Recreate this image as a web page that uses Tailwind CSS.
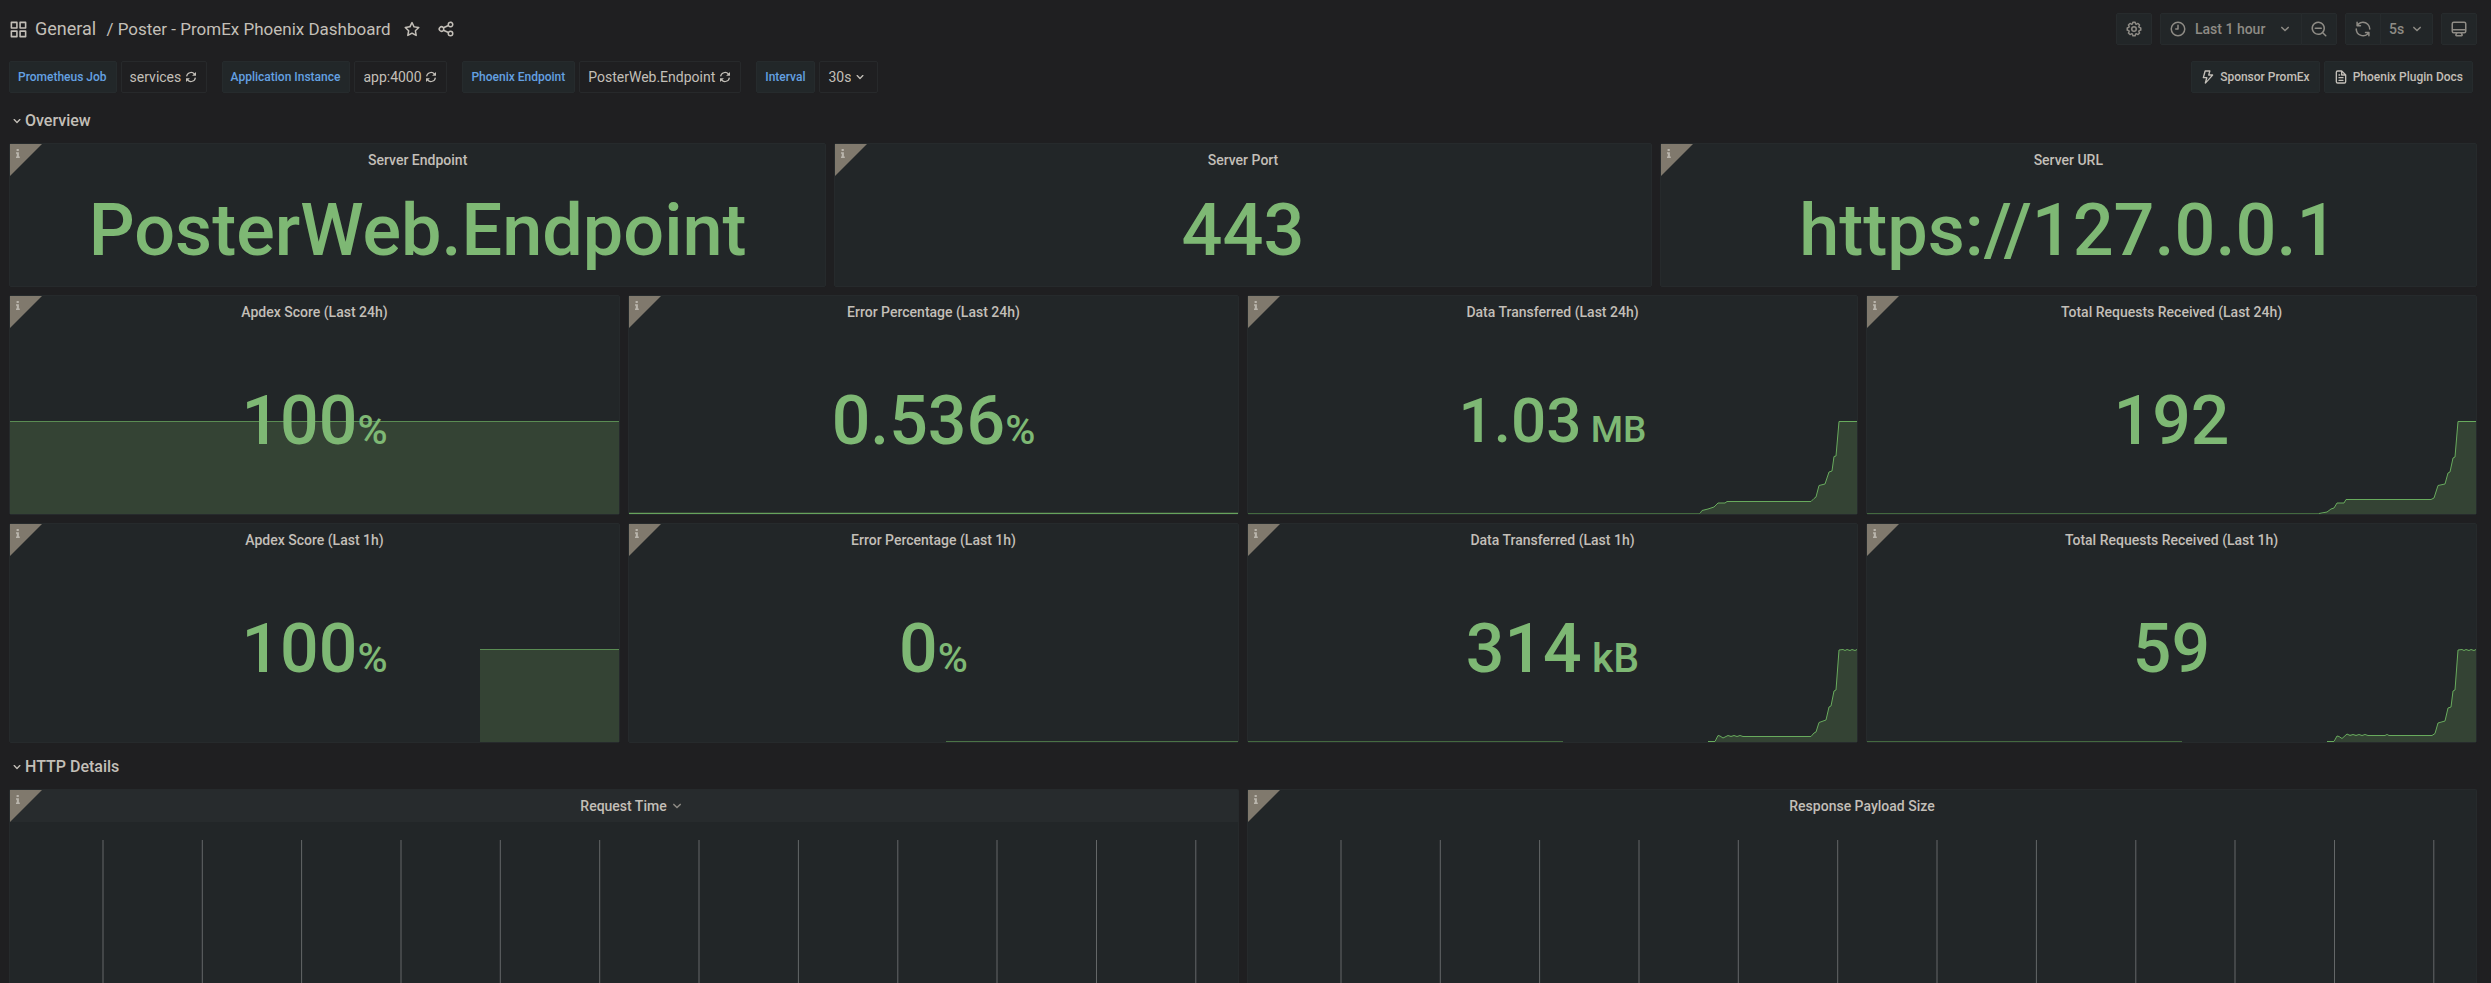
<!DOCTYPE html>
<html lang="en">
<head>
<meta charset="utf-8">
<meta name="viewport" content="width=device-width, initial-scale=1">
<title>Poster - PromEx Phoenix Dashboard</title>
<script src="https://cdn.jsdelivr.net/npm/@tailwindcss/browser@4"></script>
</head>
<body class="flex h-screen flex-col overflow-hidden bg-[#1f1f21] pt-[13px] pr-[14px] pl-[9px] font-['Roboto',sans-serif] text-sm text-[#c3bfb8]">

<!-- Icon sprite -->
<svg class="hidden" aria-hidden="true">
  <symbol id="apps" viewBox="0 0 24 24"><path d="M10,13H3a1,1,0,0,0-1,1v7a1,1,0,0,0,1,1h7a1,1,0,0,0,1-1V14A1,1,0,0,0,10,13ZM9,20H4V15H9ZM21,2H14a1,1,0,0,0-1,1v7a1,1,0,0,0,1,1h7a1,1,0,0,0,1-1V3A1,1,0,0,0,21,2ZM20,9H15V4h5Zm1,4H14a1,1,0,0,0-1,1v7a1,1,0,0,0,1,1h7a1,1,0,0,0,1-1V14A1,1,0,0,0,21,13Zm-1,7H15V15h5ZM10,2H3A1,1,0,0,0,2,3v7a1,1,0,0,0,1,1h7a1,1,0,0,0,1-1V3A1,1,0,0,0,10,2ZM9,9H4V4H9Z"/></symbol>
  <symbol id="star" viewBox="0 0 24 24"><path d="M22,9.67A1,1,0,0,0,21.14,9l-5.69-.83L12.9,3a1,1,0,0,0-1.8,0L8.55,8.16,2.86,9a1,1,0,0,0-.81.68,1,1,0,0,0,.25,1l4.13,4-1,5.68A1,1,0,0,0,6.9,21.44L12,18.77l5.1,2.67a.93.93,0,0,0,.46.12,1,1,0,0,0,.59-.19,1,1,0,0,0,.4-1l-1-5.68,4.13-4A1,1,0,0,0,22,9.67Zm-6.15,4a1,1,0,0,0-.29.88l.72,4.2-3.76-2a1.06,1.06,0,0,0-.94,0l-3.76,2,.72-4.2a1,1,0,0,0-.29-.88l-3-3,4.21-.61a1,1,0,0,0,.76-.55L12,5.7l1.88,3.82a1,1,0,0,0,.76.55l4.21.61Z"/></symbol>
  <symbol id="share" viewBox="0 0 24 24"><path d="M18,14a4,4,0,0,0-3.08,1.48l-5.1-2.35a3.64,3.64,0,0,0,0-2.26l5.1-2.35A4,4,0,1,0,14,6a4.17,4.17,0,0,0,.07.71L8.79,9.14a4,4,0,1,0,0,5.72l5.28,2.43A4.17,4.17,0,0,0,14,18a4,4,0,1,0,4-4ZM18,4a2,2,0,1,1-2,2A2,2,0,0,1,18,4ZM6,14a2,2,0,1,1,2-2A2,2,0,0,1,6,14Zm12,6a2,2,0,1,1,2-2A2,2,0,0,1,18,20Z"/></symbol>
  <symbol id="sync" viewBox="0 0 24 24"><path d="M19.91,15.51H15.38a1,1,0,0,0,0,2h2.4A8,8,0,0,1,4,12a1,1,0,0,0-2,0,10,10,0,0,0,16.88,7.23V21a1,1,0,0,0,2,0V16.5A1,1,0,0,0,19.91,15.51ZM12,2A10,10,0,0,0,5.12,4.77V3a1,1,0,0,0-2,0V7.5a1,1,0,0,0,1,1h4.5a1,1,0,0,0,0-2H6.22A8,8,0,0,1,20,12a1,1,0,0,0,2,0A10,10,0,0,0,12,2Z"/></symbol>
  <symbol id="reload" viewBox="0 0 12 12"><path d="M1.6 5.4A4.5 4.5 0 0 1 9.4 3M10.4 6.6A4.5 4.5 0 0 1 2.6 9" fill="none" stroke="currentColor" stroke-width="1.2"/><path d="M11 .9v3.9H7.1zM1 11.1V7.2h3.9z"/></symbol>
  <symbol id="angle" viewBox="0 0 24 24"><path d="M17,9.17a1,1,0,0,0-1.41,0L12,12.71,8.46,9.17a1,1,0,0,0-1.41,0,1,1,0,0,0,0,1.42l4.24,4.24a1,1,0,0,0,1.42,0L17,10.59A1,1,0,0,0,17,9.17Z"/></symbol>
  <symbol id="clock" viewBox="0 0 24 24"><g fill="none" stroke="currentColor" stroke-width="2" stroke-linecap="round" stroke-linejoin="round"><circle cx="12" cy="12" r="9"/><path d="M12 7v5H9"/></g></symbol>
  <symbol id="zoomout" viewBox="0 0 24 24"><path d="M21.71,20.29,18,16.61A9,9,0,1,0,16.61,18l3.68,3.68a1,1,0,0,0,1.42,0A1,1,0,0,0,21.71,20.29ZM11,18a7,7,0,1,1,7-7A7,7,0,0,1,11,18Zm4-8H7a1,1,0,0,0,0,2h8a1,1,0,0,0,0-2Z"/></symbol>
  <symbol id="cog" viewBox="0 0 24 24"><path d="M21.32,9.55l-1.89-.63.89-1.78A1,1,0,0,0,20.13,6L18,3.87a1,1,0,0,0-1.15-.19l-1.78.89-.63-1.89A1,1,0,0,0,13.5,2h-3a1,1,0,0,0-.95.68L8.92,4.57,7.14,3.68A1,1,0,0,0,6,3.87L3.87,6a1,1,0,0,0-.19,1.15l.89,1.78-1.89.63A1,1,0,0,0,2,10.5v3a1,1,0,0,0,.68.95l1.89.63-.89,1.78A1,1,0,0,0,3.87,18L6,20.13a1,1,0,0,0,1.15.19l1.78-.89.63,1.89a1,1,0,0,0,.95.68h3a1,1,0,0,0,.95-.68l.63-1.89,1.78.89A1,1,0,0,0,18,20.13L20.13,18a1,1,0,0,0,.19-1.15l-.89-1.78,1.89-.63A1,1,0,0,0,22,13.5v-3A1,1,0,0,0,21.32,9.55ZM20,12.78l-1.2.4A2,2,0,0,0,17.64,16l.57,1.14-1.1,1.1L16,17.64a2,2,0,0,0-2.79,1.16l-.4,1.2H11.22l-.4-1.2A2,2,0,0,0,8,17.64l-1.14.57-1.1-1.1L6.36,16A2,2,0,0,0,5.2,13.18L4,12.78V11.22l1.2-.4A2,2,0,0,0,6.36,8L5.79,6.89l1.1-1.1L8,6.36A2,2,0,0,0,10.82,5.2l.4-1.2h1.56l.4,1.2A2,2,0,0,0,16,6.36l1.14-.57,1.1,1.1L17.64,8a2,2,0,0,0,1.16,2.79l1.2.4ZM12,8a4,4,0,1,0,4,4A4,4,0,0,0,12,8Zm0,6a2,2,0,1,1,2-2A2,2,0,0,1,12,14Z"/></symbol>
  <symbol id="monitor" viewBox="0 0 24 24"><path d="M19,2H5A3,3,0,0,0,2,5V15a3,3,0,0,0,3,3H7.64l-.58,1a2,2,0,0,0,0,2,2,2,0,0,0,1.75,1h6.46A2,2,0,0,0,17,21a2,2,0,0,0,0-2l-.59-1H19a3,3,0,0,0,3-3V5A3,3,0,0,0,19,2ZM8.77,20,10,18H14l1.2,2ZM20,15a1,1,0,0,1-1,1H5a1,1,0,0,1-1-1V14H20Zm0-3H4V5A1,1,0,0,1,5,4H19a1,1,0,0,1,1,1Z"/></symbol>
  <symbol id="bolt" viewBox="0 0 24 24"><path d="M19.87,8.6A1,1,0,0,0,19,8H14.42l1.27-4.74a1,1,0,0,0-.17-.87A1,1,0,0,0,14.72,2h-7a1,1,0,0,0-1,.74l-2.68,10a1,1,0,0,0,.17.87,1,1,0,0,0,.8.39H8.89L7.08,20.74a1,1,0,0,0,1.71.93L19.7,9.57A1,1,0,0,0,19.87,8.6ZM10,17.83l1.18-4.4a1,1,0,0,0-.17-.87,1,1,0,0,0-.8-.39H6.35L8.49,4h4.93L12.15,8.74a1,1,0,0,0,1,1.26h3.57Z"/></symbol>
  <symbol id="file" viewBox="0 0 24 24"><path d="M9,10h1a1,1,0,0,0,0-2H9a1,1,0,0,0,0,2Zm0,2a1,1,0,0,0,0,2h6a1,1,0,0,0,0-2ZM20,8.94a1.31,1.31,0,0,0-.06-.27l0-.09a1.07,1.07,0,0,0-.19-.28h0l-6-6h0a1.07,1.07,0,0,0-.28-.19.32.32,0,0,0-.09,0A.88.88,0,0,0,13.05,2H7A3,3,0,0,0,4,5V19a3,3,0,0,0,3,3H17a3,3,0,0,0,3-3V9S20,9,20,8.94ZM14,5.41,16.59,8H14ZM18,19a1,1,0,0,1-1,1H7a1,1,0,0,1-1-1V5A1,1,0,0,1,7,4h5V9a1,1,0,0,0,1,1h5Zm-3-3H9a1,1,0,0,0,0,2h6a1,1,0,0,0,0-2Z"/></symbol>
  <symbol id="info" viewBox="0 0 32 32"><path d="M0 0H32L0 32Z" fill="#80796d"/><path d="M6.6 5h2.2v2H6.600zM6 8.200h2.900v4.300h.9V14H6v-1.500h.8V9.700H6z" fill="#b9b5ac"/></symbol>
</svg>

<!-- Toolbar -->
<header class="flex h-8 shrink-0 items-center">
  <svg class="size-[19px] fill-current" aria-hidden="true"><use href="#apps"/></svg>
  <nav class="ml-[7px] flex items-baseline gap-[6px] text-lg whitespace-pre" aria-label="Breadcrumb"><a href="#general">General</a><a href="#dashboard" class="text-[17px]"> / Poster - PromEx Phoenix Dashboard</a></nav>
  <button class="ml-3 size-[18px]" aria-label="Mark as favorite"><svg class="size-[18px] fill-current" aria-hidden="true"><use href="#star"/></svg></button>
  <button class="ml-4 size-[18px]" aria-label="Share dashboard"><svg class="size-[18px] fill-current" aria-hidden="true"><use href="#share"/></svg></button>
  <div class="ml-auto flex gap-2 font-medium text-[#8e8b85]">
    <button class="flex h-8 w-9 items-center justify-center rounded-xs border border-[#272b2d] bg-[#222628]" aria-label="Dashboard settings"><svg class="size-[18px] fill-current" aria-hidden="true"><use href="#cog"/></svg></button>
    <div class="flex">
      <button class="flex h-8 w-[142px] items-center rounded-l-xs border border-[#272b2d] bg-[#222628] pl-2"><svg class="size-[18px] fill-current" aria-hidden="true"><use href="#clock"/></svg><span class="ml-2">Last 1 hour</span><svg class="mr-[7px] ml-auto size-[18px] fill-current" aria-hidden="true"><use href="#angle"/></svg></button>
      <button class="-ml-px flex h-8 w-9 items-center justify-center rounded-r-xs border border-[#272b2d] bg-[#222628]" aria-label="Zoom out"><svg class="size-[18px] fill-current" aria-hidden="true"><use href="#zoomout"/></svg></button>
    </div>
    <div class="flex">
      <button class="flex h-8 w-9 items-center justify-center rounded-l-xs border border-[#272b2d] bg-[#222628]" aria-label="Refresh"><svg class="size-[18px] fill-current" aria-hidden="true"><use href="#sync"/></svg></button>
      <label class="-ml-px flex h-8 w-[53px] items-center rounded-r-xs border border-[#272b2d] bg-[#222628] pl-2"><select class="appearance-none outline-none" aria-label="Refresh interval"><option>5s</option></select><svg class="ml-[3px] size-[18px] fill-current" aria-hidden="true"><use href="#angle"/></svg></label>
    </div>
    <button class="flex h-8 w-9 items-center justify-center rounded-xs border border-[#272b2d] bg-[#222628]" aria-label="Cycle view mode"><svg class="size-[18px] fill-current" aria-hidden="true"><use href="#monitor"/></svg></button>
  </div>
</header>

<!-- Variables and links -->
<div class="mt-4 flex h-8 shrink-0 items-stretch gap-[15px] pr-1">
  <div class="flex gap-1">
    <label for="job" class="flex items-center rounded-xs border border-[#262b2d] bg-[#222729] pr-[9px] pl-2 text-xs font-medium text-[#64a1e2]">Prometheus Job</label>
    <div class="flex items-center rounded-xs border border-[#27292b] pr-[9px] pl-2"><select id="job" class="appearance-none outline-none"><option>services</option></select><svg class="ml-[3px] size-3 fill-current" aria-hidden="true"><use href="#reload"/></svg></div>
  </div>
  <div class="flex gap-1">
    <label for="instance" class="flex items-center rounded-xs border border-[#262b2d] bg-[#222729] pr-[9px] pl-2 text-xs font-medium text-[#64a1e2]">Application Instance</label>
    <div class="flex items-center rounded-xs border border-[#27292b] pr-[9px] pl-2"><select id="instance" class="appearance-none outline-none"><option>app:4000</option></select><svg class="ml-[3px] size-3 fill-current" aria-hidden="true"><use href="#reload"/></svg></div>
  </div>
  <div class="flex gap-1">
    <label for="endpoint" class="flex items-center rounded-xs border border-[#262b2d] bg-[#222729] pr-[9px] pl-2 text-xs font-medium text-[#64a1e2]">Phoenix Endpoint</label>
    <div class="flex items-center rounded-xs border border-[#27292b] pr-[9px] pl-2"><select id="endpoint" class="appearance-none outline-none"><option>PosterWeb.Endpoint</option></select><svg class="ml-[3px] size-3 fill-current" aria-hidden="true"><use href="#reload"/></svg></div>
  </div>
  <div class="flex gap-1">
    <label for="interval" class="flex items-center rounded-xs border border-[#262b2d] bg-[#222729] pr-[9px] pl-2 text-xs font-medium text-[#64a1e2]">Interval</label>
    <div class="flex items-center rounded-xs border border-[#27292b] pr-[9px] pl-2"><select id="interval" class="appearance-none outline-none"><option>30s</option></select><svg class="ml-px size-4 fill-current" aria-hidden="true"><use href="#angle"/></svg></div>
  </div>
  <div class="ml-auto flex gap-1 text-xs font-medium">
    <a href="#sponsor" class="flex items-center gap-1 rounded-xs border border-[#262b2d] bg-[#222729] pr-[9px] pl-2"><svg class="size-4 fill-current" aria-hidden="true"><use href="#bolt"/></svg>Sponsor PromEx</a>
    <a href="#docs" class="flex items-center gap-1 rounded-xs border border-[#262b2d] bg-[#222729] pr-[9px] pl-2"><svg class="size-4 fill-current" aria-hidden="true"><use href="#file"/></svg>Phoenix Plugin Docs</a>
  </div>
</div>

<main class="mt-3 flex min-h-0 flex-1 flex-col gap-2">
  <button class="flex h-[30px] shrink-0 items-center pt-0.5 text-base font-medium" aria-expanded="true"><svg class="size-4 fill-current" aria-hidden="true"><use href="#angle"/></svg>Overview</button>

  <div class="grid shrink-0 grid-cols-3 gap-2">
    <section class="relative flex h-36 flex-col rounded-xs border border-[#262a2c] bg-[#222628]">
      <svg class="absolute top-0 left-0 size-8" aria-hidden="true"><use href="#info"/></svg>
      <h2 class="h-8 text-center leading-8 font-medium">Server Endpoint</h2>
      <p class="flex flex-1 items-center justify-center text-7xl leading-none font-medium text-[#7eb874]">PosterWeb.Endpoint</p>
    </section>
    <section class="relative flex h-36 flex-col rounded-xs border border-[#262a2c] bg-[#222628]">
      <svg class="absolute top-0 left-0 size-8" aria-hidden="true"><use href="#info"/></svg>
      <h2 class="h-8 text-center leading-8 font-medium">Server Port</h2>
      <p class="flex flex-1 items-center justify-center text-7xl leading-none font-medium text-[#7eb874]">443</p>
    </section>
    <section class="relative flex h-36 flex-col rounded-xs border border-[#262a2c] bg-[#222628]">
      <svg class="absolute top-0 left-0 size-8" aria-hidden="true"><use href="#info"/></svg>
      <h2 class="h-8 text-center leading-8 font-medium">Server URL</h2>
      <p class="flex flex-1 items-center justify-center text-7xl leading-none font-medium text-[#7eb874]">https://127.0.0.1</p>
    </section>
  </div>

  <div class="grid shrink-0 grid-cols-4 gap-2">
    <section class="relative flex h-[220px] flex-col rounded-xs border border-[#262a2c] bg-[#222628]">
      <svg class="absolute bottom-0 left-0 h-[94px] w-full" viewBox="0 -1 609 94" preserveAspectRatio="none" aria-hidden="true"><path d="M0 1H609V94H0Z" fill="#344334"/><path d="M0 .5H609" fill="none" stroke="#5a8c53" vector-effect="non-scaling-stroke"/></svg>
      <svg class="absolute top-0 left-0 size-8" aria-hidden="true"><use href="#info"/></svg>
      <h2 class="h-8 text-center leading-8 font-medium">Apdex Score (Last 24h)</h2>
      <div class="relative flex flex-1 items-center justify-center text-[#7eb874]"><p class="text-[68px] leading-none font-medium">100<span class="text-[41px]">%</span></p></div>
    </section>
    <section class="relative flex h-[220px] flex-col rounded-xs border border-[#262a2c] bg-[#222628]">
      <svg class="absolute bottom-0 left-0 h-[94px] w-full" viewBox="0 -1 609 94" preserveAspectRatio="none" aria-hidden="true"><path d="M0 91H609V94H0Z" fill="#344334"/><path d="M0 92.500H609" fill="none" stroke="#67a35c" vector-effect="non-scaling-stroke"/></svg>
      <svg class="absolute top-0 left-0 size-8" aria-hidden="true"><use href="#info"/></svg>
      <h2 class="h-8 text-center leading-8 font-medium">Error Percentage (Last 24h)</h2>
      <div class="relative flex flex-1 items-center justify-center text-[#7eb874]"><p class="text-[68px] leading-none font-medium">0.536<span class="text-[41px]">%</span></p></div>
    </section>
    <section class="relative flex h-[220px] flex-col rounded-xs border border-[#262a2c] bg-[#222628]">
      <svg class="absolute bottom-0 left-0 h-[94px] w-full" viewBox="0 -1 609 94" preserveAspectRatio="none" aria-hidden="true"><path d="M452 94L454 89.500L460 88L466 86L470 82H477L479 80.500H563L566 77.500L568 76L571 64.500L577 63L581 51L584 50L586 35.500L588 35L591 .5H609V94Z" fill="#344334"/><path d="M0 92.500H452" fill="none" stroke="#44693f" vector-effect="non-scaling-stroke"/><path d="M452 92.500L454 89.500L460 88L466 86L470 82H477L479 80.500H563L566 77.500L568 76L571 64.500L577 63L581 51L584 50L586 35.500L588 35L591 .5H609" fill="none" stroke="#68ab5d" vector-effect="non-scaling-stroke"/></svg>
      <svg class="absolute top-0 left-0 size-8" aria-hidden="true"><use href="#info"/></svg>
      <h2 class="h-8 text-center leading-8 font-medium">Data Transferred (Last 24h)</h2>
      <div class="relative flex flex-1 items-center justify-center text-[#7eb874]"><p class="text-[62px] leading-none font-medium">1.03<span class="text-[37px] whitespace-pre"> MB</span></p></div>
    </section>
    <section class="relative flex h-[220px] flex-col rounded-xs border border-[#262a2c] bg-[#222628]">
      <svg class="absolute bottom-0 left-0 h-[94px] w-full" viewBox="0 -1 609 94" preserveAspectRatio="none" aria-hidden="true"><path d="M452 94L460 91L464 88L467 87L470 82H477L479 78.500H564L567 77L571 64.500L578 63L581 52L583 51L586 37L588 36L591 .5H609V94Z" fill="#344334"/><path d="M0 92.500H452" fill="none" stroke="#44693f" vector-effect="non-scaling-stroke"/><path d="M452 92.500L460 91L464 88L467 87L470 82H477L479 78.500H564L567 77L571 64.500L578 63L581 52L583 51L586 37L588 36L591 .5H609" fill="none" stroke="#68ab5d" vector-effect="non-scaling-stroke"/></svg>
      <svg class="absolute top-0 left-0 size-8" aria-hidden="true"><use href="#info"/></svg>
      <h2 class="h-8 text-center leading-8 font-medium">Total Requests Received (Last 24h)</h2>
      <div class="relative flex flex-1 items-center justify-center text-[#7eb874]"><p class="text-[68px] leading-none font-medium">192</p></div>
    </section>

    <section class="relative flex h-[220px] flex-col rounded-xs border border-[#262a2c] bg-[#222628]">
      <svg class="absolute bottom-0 left-0 h-[94px] w-full" viewBox="0 -1 609 94" preserveAspectRatio="none" aria-hidden="true"><path d="M470 1H609V94H470Z" fill="#344334"/><path d="M470 .5H609" fill="none" stroke="#5a8c53" vector-effect="non-scaling-stroke"/></svg>
      <svg class="absolute top-0 left-0 size-8" aria-hidden="true"><use href="#info"/></svg>
      <h2 class="h-8 text-center leading-8 font-medium">Apdex Score (Last 1h)</h2>
      <div class="relative flex flex-1 items-center justify-center text-[#7eb874]"><p class="text-[68px] leading-none font-medium">100<span class="text-[41px]">%</span></p></div>
    </section>
    <section class="relative flex h-[220px] flex-col rounded-xs border border-[#262a2c] bg-[#222628]">
      <svg class="absolute bottom-0 left-0 h-[94px] w-full" viewBox="0 -1 609 94" preserveAspectRatio="none" aria-hidden="true"><path d="M317 92.500H609" fill="none" stroke="#4b7346" vector-effect="non-scaling-stroke"/></svg>
      <svg class="absolute top-0 left-0 size-8" aria-hidden="true"><use href="#info"/></svg>
      <h2 class="h-8 text-center leading-8 font-medium">Error Percentage (Last 1h)</h2>
      <div class="relative flex flex-1 items-center justify-center text-[#7eb874]"><p class="text-[68px] leading-none font-medium">0<span class="text-[41px]">%</span></p></div>
    </section>
    <section class="relative flex h-[220px] flex-col rounded-xs border border-[#262a2c] bg-[#222628]">
      <svg class="absolute bottom-0 left-0 h-[94px] w-full" viewBox="0 -1 609 94" preserveAspectRatio="none" aria-hidden="true"><path d="M467 94L470 86.500L472 87L475 89L480 86.500L500 87.500H563L566 84L568 83L571 73.500L578 71L581 58L583 57L586 42L588 41L591 1H609V94Z" fill="#344334"/><path d="M0 92.500H315" fill="none" stroke="#44693f" vector-effect="non-scaling-stroke"/><path d="M460 92.500H467L470 86.500L472 87L475 89L480 86.500L483 87.500L486 86.500L489 87.500L492 86.500L495 87.500H563L566 84L568 83L571 73.500L578 71L581 58L583 57L586 42L588 41L591 1L595 .5L597 1.500L599 .5L602 1.500L604 .5L607 1.500L609 .5" fill="none" stroke="#68ab5d" vector-effect="non-scaling-stroke"/></svg>
      <svg class="absolute top-0 left-0 size-8" aria-hidden="true"><use href="#info"/></svg>
      <h2 class="h-8 text-center leading-8 font-medium">Data Transferred (Last 1h)</h2>
      <div class="relative flex flex-1 items-center justify-center text-[#7eb874]"><p class="text-[68px] leading-none font-medium">314<span class="text-[41px] whitespace-pre"> kB</span></p></div>
    </section>
    <section class="relative flex h-[220px] flex-col rounded-xs border border-[#262a2c] bg-[#222628]">
      <svg class="absolute bottom-0 left-0 h-[94px] w-full" viewBox="0 -1 609 94" preserveAspectRatio="none" aria-hidden="true"><path d="M467 94L470 87L475 89.500L480 85L503 86.500H565L568 84.500L571 74L578 72L581 59L584 58L586 42L588 41L591 1H609V94Z" fill="#344334"/><path d="M0 92.500H315" fill="none" stroke="#44693f" vector-effect="non-scaling-stroke"/><path d="M460 92.500H467L470 87L472 87.500L475 89.500L480 85L483 86.500L486 85.500L489 86.500L492 85.500L495 86.500L498 85.500L501 86.500L503 86.500H518L520 85.500L522 86.500H565L568 84.500L571 74L578 72L581 59L584 58L586 42L588 41L591 1L595 .5L597 1.500L599 .5L602 1.500L604 .5L607 1.500L609 .5" fill="none" stroke="#68ab5d" vector-effect="non-scaling-stroke"/></svg>
      <svg class="absolute top-0 left-0 size-8" aria-hidden="true"><use href="#info"/></svg>
      <h2 class="h-8 text-center leading-8 font-medium">Total Requests Received (Last 1h)</h2>
      <div class="relative flex flex-1 items-center justify-center text-[#7eb874]"><p class="text-[68px] leading-none font-medium">59</p></div>
    </section>
  </div>

  <button class="flex h-[30px] shrink-0 items-center pt-0.5 text-base font-medium" aria-expanded="true"><svg class="size-4 fill-current" aria-hidden="true"><use href="#angle"/></svg>HTTP Details</button>

  <div class="grid min-h-0 flex-1 grid-cols-2 gap-2">
    <section class="relative flex flex-col rounded-t-xs border border-b-0 border-[#262a2c] bg-[#222628]">
      <h2 class="flex h-8 shrink-0 items-center justify-center bg-[#272b2d] pl-[18px] font-medium">Request Time<svg class="ml-px size-[18px] fill-current text-[#8e8b85]" aria-hidden="true"><use href="#angle"/></svg></h2>
      <svg class="absolute top-0 left-0 size-8" aria-hidden="true"><use href="#info"/></svg>
      <svg class="mt-[18px] min-h-0 w-full flex-1" viewBox="0 0 1228 143" preserveAspectRatio="none" role="img" aria-label="Request time chart"><path d="M93 0V143M192.300 0V143M291.600 0V143M391 0V143M490.300 0V143M589.700 0V143M689 0V143M788.400 0V143M887.800 0V143M987 0V143M1086.500 0V143M1185.800 0V143" stroke="#646768" vector-effect="non-scaling-stroke"/></svg>
    </section>
    <section class="relative flex flex-col rounded-t-xs border border-b-0 border-[#262a2c] bg-[#222628]">
      <h2 class="h-8 shrink-0 text-center leading-8 font-medium">Response Payload Size</h2>
      <svg class="absolute top-0 left-0 size-8" aria-hidden="true"><use href="#info"/></svg>
      <svg class="mt-[18px] min-h-0 w-full flex-1" viewBox="0 0 1228 143" preserveAspectRatio="none" role="img" aria-label="Response payload size chart"><path d="M93 0V143M192.300 0V143M291.600 0V143M391 0V143M490.300 0V143M589.700 0V143M689 0V143M788.400 0V143M887.800 0V143M987 0V143M1086.500 0V143M1185.800 0V143" stroke="#646768" vector-effect="non-scaling-stroke"/></svg>
    </section>
  </div>
</main>
</body>
</html>
